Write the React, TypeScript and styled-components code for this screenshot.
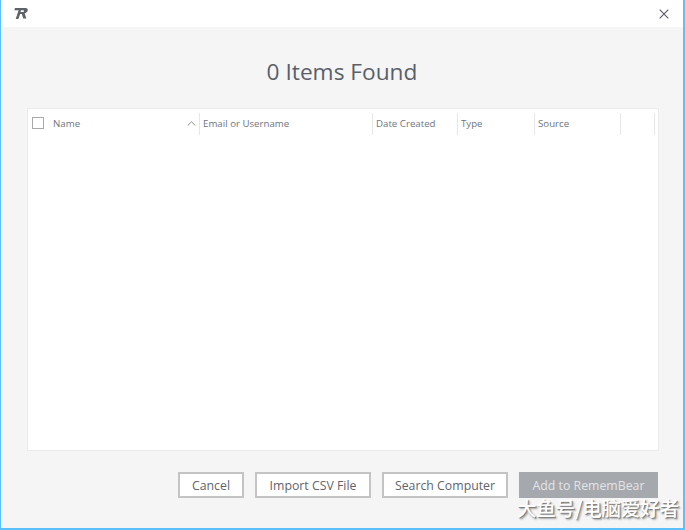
import React from 'react'
import styled, { createGlobalStyle } from 'styled-components'

const GlobalStyle = createGlobalStyle`
  html, body { margin: 0; padding: 0; }
  body { font-family: 'Open Sans', 'Noto Sans', 'Liberation Sans', sans-serif; }
`

const Win = styled.div`
  position: relative;
  box-sizing: border-box;
  width: 685px;
  height: 530px;
  display: flex;
  flex-direction: column;
  background: #f5f5f5;
  border: solid #5cc0fb;
  border-width: 0 2px 2px 1px;
  overflow: hidden;
`
const TitleBar = styled.div`
  flex: none;
  height: 27px;
  background: #fff;
  display: flex;
  align-items: center;
  justify-content: space-between;
  padding: 0 14px 0 12px;
`
const Heading = styled.h1`
  margin: 27px 0 19px;
  height: 35px;
  font-size: 22.7px;
  line-height: 35px;
  font-weight: 400;
  color: #5a5f68;
  text-align: center;
`
const Table = styled.div`
  flex: none;
  box-sizing: border-box;
  width: 632px;
  height: 343px;
  margin-left: 26px;
  background: #fff;
  border: 1px solid #ebebeb;
  padding-top: 4px;
`
const HeadRow = styled.div`
  display: grid;
  grid-template-columns: 172px 173px 85px 77px 86px 34px;
  height: 22px;
`
const HeadCell = styled.div`
  display: flex;
  align-items: center;
  padding: 0 0 2px 3px;
  font-size: 9.7px;
  color: #70757e;
  border-right: 1px solid #e6e6e6;
  box-sizing: border-box;
`
const NameCell = styled(HeadCell)`
  padding-left: 4px;
  gap: 9px;
`
const Check = styled.span`
  flex: none;
  width: 10px;
  height: 10px;
  border: 1px solid #a8a8a8;
`
const Sort = styled.svg`
  margin-left: auto;
  margin-right: 3px;
`
const Footer = styled.div`
  display: flex;
  justify-content: flex-end;
  gap: 11px;
  margin: 21px 25px 0 0;
`
const Btn = styled.button<{ $w: number }>`
  box-sizing: border-box;
  width: ${p => p.$w}px;
  height: 26px;
  padding: 0;
  background: #fff;
  border: 2px solid #c4c4c4;
  font-family: inherit;
  font-size: 12.3px;
  color: #5f646c;
`
const PrimaryBtn = styled(Btn)`
  background: #a5a9ae;
  border-color: #a5a9ae;
  color: #e2e4e6;
`
const Watermark = styled.div`
  position: absolute;
  left: 516px;
  top: 496px;
  font-family: 'Noto Sans CJK SC', sans-serif;
  font-size: 19.6px;
  font-weight: 500;
  line-height: 24px;
  letter-spacing: -0.3px;
  white-space: nowrap;
  color: #fff;
  text-shadow: 1px 1px 1px #777, 2px 2px 2px #aaa;
`

const Logo = () => (
  <svg width="16" height="13" viewBox="0 0 16 13">
    <path
      d="M2 1h10.500c1.800 0 2.600 1 2.200 2.500-.4 1.500-1.500 2.500-3 2.800l1.600 5.200H10.300L8.800 7H7.200L5.300 12H2.700L5.600 3.300H1.300z"
      fill="#5f6169"
    />
    <path d="M8 3.300l-.5 1.800h2.400c.6 0 1-.3 1.100-.9.100-.6-.2-.9-.7-.9z" fill="#fff" />
  </svg>
)

const Close = () => (
  <svg width="10" height="10" viewBox="0 0 10 10">
    <path d="M.7.700l8.600 8.600M9.300.700L.7 9.300" stroke="#555a63" strokeWidth="1.100" fill="none" />
  </svg>
)

const App = () => {
  return (
    <Win>
      <GlobalStyle />
      <TitleBar>
        <Logo />
        <Close />
      </TitleBar>
      <Heading>0 Items Found</Heading>
      <Table>
        <HeadRow>
          <NameCell>
            <Check />
            Name
            <Sort width="9" height="5" viewBox="0 0 9 5">
              <path d="M.7 4.500L4.500.8l3.800 3.700" stroke="#8a8d92" fill="none" />
            </Sort>
          </NameCell>
          <HeadCell>Email or Username</HeadCell>
          <HeadCell>Date Created</HeadCell>
          <HeadCell>Type</HeadCell>
          <HeadCell>Source</HeadCell>
          <HeadCell />
        </HeadRow>
      </Table>
      <Footer>
        <Btn $w={66}>Cancel</Btn>
        <Btn $w={116}>Import CSV File</Btn>
        <Btn $w={126}>Search Computer</Btn>
        <PrimaryBtn $w={139}>Add to RememBear</PrimaryBtn>
      </Footer>
      <Watermark>大鱼号/电脑爱好者</Watermark>
    </Win>
  )
}

export default App
